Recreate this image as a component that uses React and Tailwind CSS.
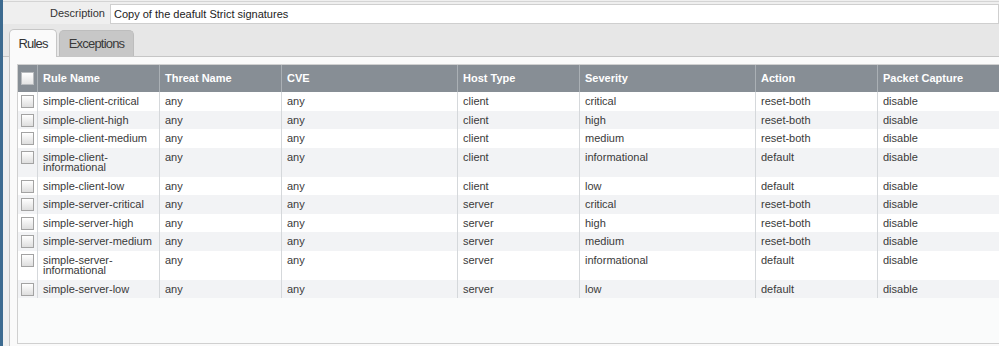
import React from "react";

const rows = [
  ["simple-client-critical", "any", "any", "client", "critical", "reset-both", "disable"],
  ["simple-client-high", "any", "any", "client", "high", "reset-both", "disable"],
  ["simple-client-medium", "any", "any", "client", "medium", "reset-both", "disable"],
  [["simple-client-", "informational"], "any", "any", "client", "informational", "default", "disable"],
  ["simple-client-low", "any", "any", "client", "low", "default", "disable"],
  ["simple-server-critical", "any", "any", "server", "critical", "reset-both", "disable"],
  ["simple-server-high", "any", "any", "server", "high", "reset-both", "disable"],
  ["simple-server-medium", "any", "any", "server", "medium", "reset-both", "disable"],
  [["simple-server-", "informational"], "any", "any", "server", "informational", "default", "disable"],
  ["simple-server-low", "any", "any", "server", "low", "default", "disable"],
];

const widths = ["w-[122px]", "w-[122px]", "w-[176px]", "w-[122px]", "w-[176px]", "w-[122px]", "w-[122px]"];
const headers = ["Rule Name", "Threat Name", "CVE", "Host Type", "Severity", "Action", "Packet Capture"];

function Checkbox({ header }) {
  return (
    <div
      className={
        header
          ? "w-[13px] h-[13px] border border-[#b9bcbf] bg-gradient-to-b from-[#ffffff] to-[#e4e4e4]"
          : "w-[13px] h-[13px] border border-[#a3a3a3] bg-gradient-to-b from-[#ffffff] to-[#dedede]"
      }
    />
  );
}

export default function App() {
  return (
    <div
      className="w-[999px] h-[346px] flex bg-[#efefef] overflow-hidden"
      style={{ fontFamily: '"Liberation Sans", Arial, sans-serif' }}
    >
      <div className="w-[3px] shrink-0 bg-[#3d6b90]" />
      <div className="flex-1 flex flex-col min-w-0 mt-[1px] border-t border-[#d4d4d4]">
        {/* Description row */}
        <div className="flex items-start pt-[2px]">
          <div className="w-[102px] shrink-0 text-right text-[11px] leading-[19px] text-[#333]">Description</div>
          <div className="ml-[5px] flex-1 h-[20px] border border-[#cfcfcf] bg-white pl-[3px] text-[11px] leading-[18px] text-[#222]">
            Copy of the deafult Strict signatures
          </div>
        </div>
        {/* Tab strip */}
        <div className="flex items-end h-[33px] bg-[#e7e7e7] border-b border-[#c6c6c6] pl-[6px]">
          <div className="relative top-[1px] w-[48px] h-[28px] bg-[#fafafa] border border-b-0 border-[#c6c6c6] rounded-t-[5px] flex items-center justify-center text-[13px] tracking-[-0.8px] text-[#333]">
            Rules
          </div>
          <div className="ml-[2px] w-[75px] h-[26px] bg-[#c7c7c7] border border-b-0 border-[#bdbdbd] rounded-t-[5px] flex items-center justify-center text-[13px] tracking-[-0.8px] text-[#3a3a3a]">
            Exceptions
          </div>
        </div>
        {/* Panel */}
        <div className="flex-1 flex flex-col ml-[6px] border-l border-[#c6c6c6] bg-[#fafafa] pt-[7px] pl-[7px] pb-[2px] min-h-0">
          <div className="flex-1 flex flex-col border-t border-l border-b border-[#d0d0d0] bg-[#fafbfb] overflow-hidden">
            {/* Header */}
            <div className="flex h-[27px] shrink-0 bg-[#878e95] text-white font-bold text-[11px]">
              <div className="w-[20px] shrink-0 border-r border-[#aab0b5] flex items-center justify-center">
                <Checkbox header />
              </div>
              {headers.map((h, i) => (
                <div
                  key={h}
                  className={`${widths[i]} shrink-0 border-r border-[#aab0b5] flex items-center pl-[5px] whitespace-nowrap`}
                >
                  {h}
                </div>
              ))}
            </div>
            {/* Rows */}
            {rows.map((r, ri) => (
              <div
                key={ri}
                className={`flex shrink-0 text-[11px] text-[#3a3a3a] ${ri % 2 === 0 ? "bg-white" : "bg-[#f2f3f5]"}`}
              >
                <div className="w-[20px] shrink-0 border-r border-[#d5d8db] flex justify-center pt-[3px]">
                  <Checkbox />
                </div>
                {r.map((c, ci) => (
                  <div
                    key={ci}
                    className={`${widths[ci]} shrink-0 border-r border-[#d5d8db] pl-[5px] pt-[4px] pb-[4px] leading-[10.5px] whitespace-nowrap`}
                  >
                    {Array.isArray(c) ? (
                      <>
                        {c[0]}
                        <br />
                        {c[1]}
                      </>
                    ) : (
                      c
                    )}
                  </div>
                ))}
              </div>
            ))}
            <div className="flex-1" />
          </div>
        </div>
      </div>
    </div>
  );
}
